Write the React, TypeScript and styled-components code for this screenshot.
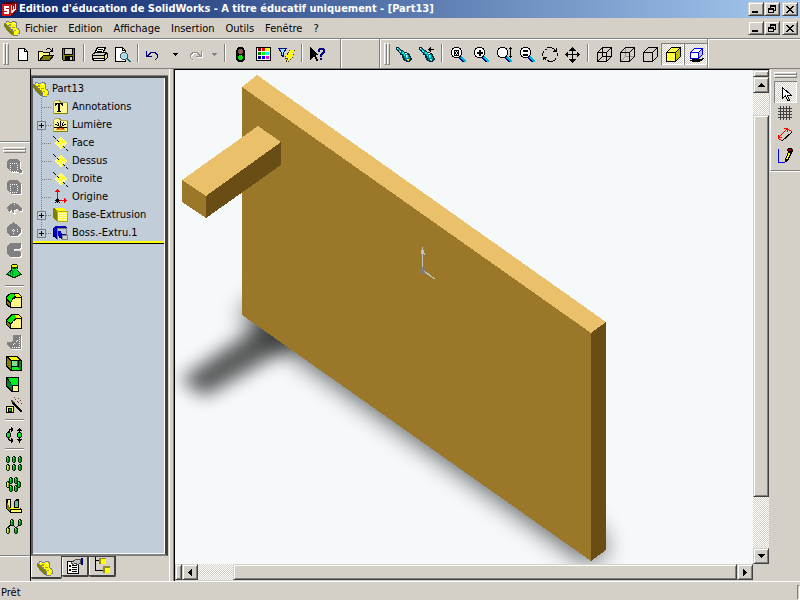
import React from "react";
import styled, { createGlobalStyle, css } from "styled-components";

const face = "#d4d0c8";
const dither = `repeating-conic-gradient(#ffffff 0 25%, ${face} 0 50%) 0 0 / 2px 2px`;
const uiFont = `"DejaVu Sans Condensed", "DejaVu Sans", sans-serif`;

const GlobalStyle = createGlobalStyle`
  * { box-sizing: border-box; }
  body { margin: 0; background: ${face}; overflow: hidden; }
  button { font: inherit; color: inherit; background: none; border: 0; padding: 0; margin: 0; }
  svg { display: block; flex: none; }
`;

const raised = css`
  background: ${face};
  border: 1px solid;
  border-color: ${face} #404040 #404040 ${face};
  box-shadow: inset 1px 1px #fff, inset -1px -1px #808080;
`;

const Window = styled.div`
  display: flex;
  flex-direction: column;
  height: 100vh;
  background: ${face};
  color: #000;
  font: 11px/14px ${uiFont};
  cursor: default;
`;

const TitleBar = styled.header`
  display: flex;
  align-items: center;
  height: 18px;
  flex: none;
  padding: 0 2px 0 1px;
  background: linear-gradient(90deg, #0a246a, #a6caf0);
`;

const Title = styled.h1`
  flex: 1;
  margin: 0 0 0 1px;
  color: #fff;
  font: bold 11px/18px ${uiFont};
  white-space: nowrap;
`;

const WindowButtons = styled.div`
  display: flex;
  margin-left: auto;
`;

const WindowButton = styled.button<{ $spaced?: boolean }>`
  ${raised}
  width: 16px;
  height: 14px;
  margin-left: ${(p) => (p.$spaced ? 2 : 0)}px;
  display: flex;
  align-items: center;
  justify-content: center;
`;

const MenuBar = styled.nav`
  display: flex;
  align-items: center;
  height: 20px;
  flex: none;
  padding: 0 2px 0 4px;
`;

const MenuItem = styled.button`
  padding: 2px 6px 0 5px;
  height: 18px;
  white-space: nowrap;
`;

const Toolbars = styled.div`
  display: flex;
  flex: none;
  height: 31px;
  border-top: 1px solid #808080;
  box-shadow: inset 0 1px #fff;
  border-bottom: 1px solid #808080;
`;

const Band = styled.div<{ $width?: number }>`
  display: flex;
  align-items: flex-start;
  padding: 4px 0 0 3px;
  width: ${(p) => (p.$width ? `${p.$width}px` : "auto")};
  border-right: 1px solid #808080;
  box-shadow: 1px 0 #fff;
  margin-right: 1px;
`;

const Grip = styled.div<{ $flat?: boolean }>`
  flex: none;
  display: flex;
  flex-direction: ${(p) => (p.$flat ? "column" : "row")};
  width: ${(p) => (p.$flat ? "auto" : "6px")};
  height: ${(p) => (p.$flat ? "6px" : "22px")};
  margin: ${(p) => (p.$flat ? "0 3px 4px" : "0 2px 0 0")};
  &::before,
  &::after {
    content: "";
    flex: 1;
    border: 1px solid;
    border-color: #fff #808080 #808080 #fff;
  }
`;

const Tool = styled.button<{ $pressed?: boolean; $side?: boolean }>`
  flex: none;
  width: 23px;
  height: ${(p) => (p.$side ? 21 : 22)}px;
  padding: ${(p) => (p.$side ? "1px 0 0 2px" : "1px 0 0 3px")};
  ${(p) =>
    p.$pressed &&
    css`
      background: ${dither};
      box-shadow: inset 1px 1px #808080, inset -1px -1px #fff;
    `}
`;

const DropArrow = styled.button<{ $width: number }>`
  width: ${(p) => p.$width}px;
  height: 22px;
  display: flex;
  align-items: center;
  justify-content: center;
`;

const Rule = styled.div<{ $flat?: boolean }>`
  flex: none;
  ${(p) =>
    p.$flat
      ? css`
          height: 2px;
          margin: 3px 2px;
          width: 19px;
          border-top: 1px solid #808080;
          border-bottom: 1px solid #fff;
        `
      : css`
          width: 2px;
          margin: 1px 3px;
          height: 18px;
          border-left: 1px solid #808080;
          border-right: 1px solid #fff;
        `}
`;

const Workspace = styled.main`
  display: grid;
  grid-template-columns: 30px 140px minmax(0, 1fr) 30px;
  flex: 1;
  min-height: 0;
`;

const SideColumn = styled.aside`
  display: flex;
  flex-direction: column;
`;

const SideSpacer = styled.div`
  flex: none;
  height: 73px;
  border-bottom: 1px solid #808080;
  box-shadow: 0 1px #fff;
`;

const SideTools = styled.div`
  flex: 1;
  display: flex;
  flex-direction: column;
  padding: 5px 0 0 3px;
  border-bottom: 1px solid #808080;
  ${Grip} { margin: 0 4px 3px 0; }
`;

const SideFoot = styled.div`
  flex: none;
  height: 25px;
  box-shadow: inset 0 1px #fff;
`;

const ManagerPanel = styled.section`
  display: flex;
  flex-direction: column;
  padding-top: 7px;
  border-left: 1px solid #000;
  border-right: 1px solid #fff;
  min-height: 0;
`;

const TreePane = styled.div`
  flex: 1;
  min-height: 0;
  margin-right: 1px;
  background: #c1cdd8;
  border: solid;
  border-width: 2px 3px 2px 2px;
  border-color: #404040 #404040 #808080 #606060;
  box-shadow: inset -1px -1px #fff, 0 -1px #808080;
`;

const Tree = styled.ul`
  list-style: none;
  margin: 0;
  padding: 1px 2px 0 0;
`;

const TreeRow = styled.li<{ $root?: boolean }>`
  display: flex;
  align-items: center;
  height: 18px;
  padding: 2px 0 0 ${(p) => (p.$root ? 0 : 2)}px;
  gap: 3px;
  white-space: nowrap;
`;

const Branch = styled.span`
  width: 17px;
  height: 18px;
  margin-right: -3px;
  flex: none;
`;

const RollbackBar = styled.div`
  height: 3px;
  margin-right: 1px;
  background: #ff0;
  border-bottom: 1px solid #000;
`;

const Tabs = styled.div`
  display: flex;
  height: 25px;
  flex: none;
`;

const Tab = styled.button<{ $active?: boolean }>`
  width: ${(p) => (p.$active ? 31 : 27)}px;
  height: ${(p) => (p.$active ? 23 : 21)}px;
  padding: ${(p) => (p.$active ? "3px 2px 0 0" : "0")};
  display: flex;
  align-items: center;
  justify-content: center;
  border: solid #404040;
  border-width: ${(p) => (p.$active ? "0 1px 2px 0" : "1px 2px 2px 0")};
  border-radius: 0 0 2px 2px;
  box-shadow: inset 1px 0 #fff;
`;

const Document = styled.section`
  display: grid;
  grid-template-columns: minmax(0, 1fr) 16px;
  grid-template-rows: minmax(0, 1fr) 16px;
  margin-left: 4px;
  border-left: 1px solid #000;
  border-top: 1px solid #000;
  border-right: 1px solid ${face};
  box-shadow: -1px 0 #808080;
  padding-bottom: 1px;
`;

const Viewport = styled.div`
  background: #f5f9fa;
  min-height: 0;
  overflow: hidden;
  svg { width: 100%; height: 100%; }
`;

const ScrollBar = styled.div<{ $vertical?: boolean }>`
  display: flex;
  flex-direction: ${(p) => (p.$vertical ? "column" : "row")};
  background: ${dither};
`;

const ScrollButton = styled.button`
  ${raised}
  flex: none;
  width: 16px;
  height: 16px;
  display: flex;
  align-items: center;
  justify-content: center;
`;

const Splitter = styled.div<{ $vertical?: boolean }>`
  ${raised}
  flex: none;
  width: ${(p) => (p.$vertical ? 16 : 7)}px;
  height: ${(p) => (p.$vertical ? 7 : 16)}px;
`;

const Track = styled.div<{ $vertical?: boolean; $before: number; $thumb: number; $after: number }>`
  flex: 1;
  min-width: 0;
  min-height: 0;
  display: grid;
  ${(p) => (p.$vertical ? "grid-template-rows" : "grid-template-columns")}:
    ${(p) => `${p.$before}fr ${p.$thumb}fr ${p.$after}fr`};
`;

const Thumb = styled.div<{ $vertical?: boolean }>`
  ${raised}
  ${(p) => (p.$vertical ? "grid-row: 2" : "grid-column: 2")};
`;

const SketchTools = styled.div`
  display: flex;
  flex-direction: column;
  align-items: flex-start;
  padding: 3px 0 4px 3px;
  border-left: 1px solid #fff;
  border-bottom: 1px solid #808080;
  box-shadow: 0 1px #fff;
  ${Grip} { align-self: stretch; margin: 0 3px 3px 0; }
`;

const StatusBar = styled.footer`
  display: flex;
  align-items: flex-end;
  justify-content: space-between;
  flex: none;
  height: 19px;
  padding: 0 0 0 1px;
  border-top: 1px solid #fff;
`;

const StatusCell = styled.div`
  width: 3px;
  height: 15px;
  border: 1px solid;
  border-color: #808080 #fff #fff #808080;
`;

function Svg({ w = 18, h = 18, children }: { w?: number; h?: number; children: React.ReactNode }) {
  return (
    <svg width={w} height={h} viewBox={`0 0 ${w} ${h}`} shapeRendering="crispEdges" fill="none" aria-hidden="true">
      {children}
    </svg>
  );
}

const Glyphs = {
  minimize: <path d="M0 6h6v2H0z" fill="#000" />,
  restore: <path d="M2.5 4V.5h5v5H6M2 1.5h6M.5 3.5h5v4h-5zM0 4.5h6" stroke="#000" />,
  close: <path d="M0 1h2v1h1v1h2V2h1V1h2v1H7v1H6v1H5v1h1v1h1v1h1v1H6V7H5V6H3v1H2v1H0V7h1V6h1V5h1V4H2V3H1V2H0z" fill="#000" />,
};

function FrameButtons() {
  return (
    <WindowButtons>
      <WindowButton aria-label="Réduire"><Svg w={8} h={8}>{Glyphs.minimize}</Svg></WindowButton>
      <WindowButton aria-label="Restaurer"><Svg w={8} h={8}>{Glyphs.restore}</Svg></WindowButton>
      <WindowButton aria-label="Fermer" $spaced><Svg w={8} h={8}>{Glyphs.close}</Svg></WindowButton>
    </WindowButtons>
  );
}

const PartIcon = () => (
  <Svg w={16} h={16}>
    <path d="M0 3h2V1h3v1h3V1h4v1h1v6h2v2h1v4h-2v2H9v-1H7v-2H5v-2H3V9H2V7H0z" fill="#808080" />
    <path d="M0 4h2v1h1v2h2v2h1v1h2v2h1v3H8v-1H6v-2H4v-2H2V8H1V6H0z" fill="#808000" />
    <path d="M2 3h1V2h2v1h3V2h3v1h1v5h1v1h1v1h1v3h-1v2h-4v-4H9V9H7V7H5V5H3V4H2z" fill="#ff0" />
    <path d="M5 4h2v2H5zM8 7h3v1H8zM10 10h2v1h-2z" fill="#b0a020" />
    <path d="M3 2h1v1H3zM9 3h2v1H9zM12 10h1v1h-1z" fill="#ffffc0" />
  </Svg>
);

const LogoIcon = () => (
  <Svg w={17} h={18}>
    <path d="M1 4h1V3h3V2h11v9h-1v2h-2v2h-2v1H1z" fill="#500000" />
    <path d="M1 4h9v12H1z" fill="#d01818" />
    <path d="M10 4h2V3h4v8h-2v2h-2v2h-2z" fill="#8c1010" />
    <path d="M3 6h5v2H5v1h3v5H3v-2h3v-1H3z" fill="#fff" />
    <path d="M10 5h1v5h1V6h1v3h1V4h1v6h-1v1h-1v1h-1v1h-2z" fill="#e8e8e8" />
  </Svg>
);

const Lens = ({ children }: { children?: React.ReactNode }) => (
  <Svg>
    <path d="M11 10h2v1h1v1h1v1h1v1h1v2h-2v-1h-1v-1h-1v-1h-1v-1h-1z" fill="#00b8d8" />
    <path d="M10 11h1v1h1v1h1v1h1v1h1v1h-2v-1h-1v-1h-1v-1h-1z" fill="#000080" />
    <path d="M5 1h5v1h2v2h1v5h-1v2h-2v1H5v-1H3V9H2V4h1V2h2z" fill="#000" />
    <path d="M5 2h5v1h1v1h1v5h-1v1h-1v1H5v-1H4V9H3V4h1V3h1z" fill="#fff" />
    {children}
  </Svg>
);

const Torch = ({ arrow }: { arrow?: boolean }) => (
  <Svg>
    <path d="M1 1h3v1h1v1h1v1h2v1h1v1h3v1h2v1h1v2h1v2h1v2h-1v1h-1v1h-4v-1H9v-1H8v-2H7V9H5V7H4V6H3V5H2V4H1z" fill="#002838" />
    <path d="M2 2h2v1h1v1h1v1h2v1h1v1h3v1h1v1h1v2h1v3h-1v1h-2v-1h-2v-2H9v-2H8V8H6V7H5V5H4V4H2z" fill="#008890" />
    <path d="M3 3h1v1h1v1h1v1H4V4H3zM7 6h2v2H7zM9 8h1v2H9zM11 9h2v3h-2z" fill="#00f0f0" />
    <path d="M2 2h1v1H2zM5 5h1v1H5zM10 7h2v1h-2zM11 9h1v2h-1zM12 13h1v1h-1z" fill="#fff" />
    <path d="M13 13h1v2h-1z" fill="#e0e000" />
    {arrow && <path d="M10 3h6v1h-6zM11 2h1v3h-1zM12 1h1v5h-1z" fill="#000" />}
  </Svg>
);

const Cube = ({ kind }: { kind: "wire" | "grey" | "hidden" | "shaded" | "shadow" }) => {
  if (kind === "shadow")
    return (
      <Svg>
        <path d="M3 14h2v-1h10v-1h2v1h-1v1h-1v1h-2v1H5v-1H3z" fill="#000" />
        <path d="M7.500 2.500h8v5l-4 5v-6h-8z" fill="#fff" stroke="#00f" />
        <path d="M11.500 12.500v-6l4-4v6z" fill="#c0c0c0" stroke="#00f" />
        <path d="M3.500 6.500h8v6h-8z" fill="#fff" stroke="#00f" />
      </Svg>
    );
  return (
    <Svg>
      {kind === "shaded" && (
        <>
          <path d="M2 6l5-5h10v9l-5 6H2z" fill="#ffff40" />
          <path d="M12 6l5-5v9l-5 6z" fill="#c0c000" />
          <path d="M3 8.500h8M3 10.500h8M3 12.500h8M3 14.500h8" stroke="#fffbc0" strokeDasharray="1 1" />
        </>
      )}
      {kind === "wire" && <path d="M7.500 1v9.500H17M7.500 10.500l-5 5" stroke="#000" />}
      {kind === "grey" && <path d="M7.500 1v9.500H17M7.500 10.500l-5 5" stroke="#909090" />}
      <path d="M2.500 6.500h9v9h-9zM2.500 6.500l5-5h9l-5 5M16.500 1.500v9l-5 5" stroke="#000" />
    </Svg>
  );
};

const undoPath = "M1 5h1v4h1V8h1V7h1V6h6v1h1v1h1v4h-1v1h-1v1h-1v-1h1v-1h1V9h-1V8h-1V7H6v1H5v1H4v1h3v1H1z";

const swatches = ["#800000", "#ff0000", "#ffff00", "#008000", "#00ff00", "#00ffff", "#000080", "#0000ff", "#ff00ff"];

const Icons: Record<string, React.ReactNode> = {
  neuf: <Svg><path d="M4.500 2.500h6l3 3v9h-9z" fill="#fff" stroke="#000" /><path d="M10.500 2.500v3h3" stroke="#000" /></Svg>,
  ouvrir: (
    <Svg>
      <path d="M1.500 14.500v-9h4l1 1h6v3" fill="#ffff80" stroke="#000" />
      <path d="M2.500 14.500l4-5h10l-4 5z" fill="#808000" stroke="#000" />
      <path d="M9 3.500h1M10 2.500h3M13 3.500h1M14 4.500h2M13 5.500h3M15.500 2v4" stroke="#000" />
    </Svg>
  ),
  enregistrer: (
    <Svg>
      <path d="M2.500 2.500h12v12h-11l-1-1z" fill="#808000" stroke="#000" />
      <path d="M5 3h7v5H5z" fill={face} /><path d="M4.500 3v5.500h8V3" stroke="#000" />
      <path d="M5 10h8v5H5z" fill="#000" /><path d="M10 11h2v3h-2z" fill={face} />
    </Svg>
  ),
  imprimer: (
    <Svg>
      <path d="M6.500 1.500h8l-3 6h-8z" fill="#fff" stroke="#000" />
      <path d="M7 3.500h5M6 5.500h5" stroke="#000" />
      <path d="M1.500 8.500l3-2h10l2 1v4l-3 3h-11l-1-2z" fill={face} stroke="#000" />
      <path d="M2 9.500h11v5M13 9l3-2M2 12.500h11" stroke="#000" />
      <path d="M10 10.500h2" stroke="#ff0" /><path d="M3 13h9v1H3z" fill="#fff" />
    </Svg>
  ),
  apercu: (
    <Svg>
      <path d="M1.500 1.500h7l3 3v11h-10z" fill="#fff" stroke="#000" /><path d="M8.500 1.500v3h3" stroke="#000" />
      <path d="M8.500 6.500h3l2 2v3l-2 2h-3l-2-2v-3z" fill="#a8dce4" stroke="#505050" />
      <path d="M12 12h2v1h1v1h1v1h1v1h-2v-1h-1v-1h-1v-1h-1z" fill="#006878" />
    </Svg>
  ),
  annuler: <Svg><path d={undoPath} fill="#000080" /></Svg>,
  retablir: (
    <Svg>
      <path d={undoPath} fill="#fff" transform="matrix(-1 0 0 1 16 1)" />
      <path d={undoPath} fill="#909090" transform="matrix(-1 0 0 1 15 0)" />
    </Svg>
  ),
  reconstruire: (
    <Svg>
      <path d="M6 1h5v1h1v2h1v10h-1v1h-1v1H6v-1H5v-1H4V4h1V2h1z" fill="#000" />
      <path d="M7 3h3v1h1v3h-1v1H7V7H6V4h1z" fill="#806060" /><path d="M7 4h1v1H7zM9 4h1v1H9zM8 5h1v1H8zM7 6h1v1H7zM9 6h1v1H9z" fill="#e03030" />
      <path d="M7 9h3v1h1v3h-1v1H7v-1H6v-3h1z" fill="#00e000" />
    </Svg>
  ),
  couleurs: (
    <Svg>
      <path d="M1 1h15v14H1z" fill="#000" />
      <path d="M2 2h13v12H2z" fill="#fff" />
      {swatches.map((c, i) => (
        <rect key={c} x={3 + (i % 3) * 4} y={2 + Math.floor(i / 3) * 4} width="3" height="3" fill={c} />
      ))}
    </Svg>
  ),
  filtre: (
    <Svg>
      <path d="M.500 2.500h8l-3 4v4l-2-1v-3z" fill="#80e8ff" stroke="#000080" />
      <path d="M12 4h4v1h-1v2h-1v1h2v1h-1v1h-1v1h-1v1h-1v1h-1v1h-1v1H8v-2h1v-2H7v-2h1V9h1V7h1V6h1V5h1z" fill="#ff0" />
      <path d="M11.500 4v1M10.500 6v1M9.500 7v2M7 10.500h1M7 12.500h3M9.500 12v2M8.500 14v2M10 15.500h1M12 13.500h1M14 11.500h1M15.500 8v1M16 4.500h1" stroke="#404000" />
    </Svg>
  ),
  aide: (
    <Svg>
      <path d="M1 1h1v1h1v1h1v1h1v1h1v1h1v1h1v1h1v1H7v2h1v2h1v2H7v-2H6v-2H4v1H3v1H2v1H1z" fill="#000" />
      <path d="M9 5V3h1V2h5v1h1v4h-1v1h-1v1h-1v2h-2V8h1V7h1V6h1V4h-3v2H9zM11 12h2v2h-2z" fill="#000080" />
    </Svg>
  ),
  vuePrecedente: <Torch />,
  orientation: <Torch arrow />,
  zoomMieux: <Lens><path d="M5 4h5v6H5z" fill="#000" /><path d="M6 5h1v1H6zM8 5h1v1H8zM7 6h1v2H7zM6 8h1v1H6zM8 8h1v1H8z" fill="#fff" /></Lens>,
  zoomFenetre: <Lens><path d="M7 4h2v2h2v2H9v2H7V8H5V6h2z" fill="#000" /></Lens>,
  zoomAvant: <Lens><path d="M15 1h1v1h1v1h-1v7h1v1h-1v1h-1v-1h-1v-1h1V3h-1V2h1z" fill="#000" /></Lens>,
  zoomSelection: <Lens><path d="M5 4h5v2H5zM5 8h5v2H5z" fill="#000" /></Lens>,
  rotation: (
    <Svg>
      <path d="M6 1.500h5M11 2.500h2M13.500 3v3M16.500 7v3M4 3.500h2M2.500 5v2M1.500 7v3M4.500 12v2M6 14.500h2M7 15.500h5M12 14.500h2M14.500 12v2" stroke="#000" />
      <path d="M12 5.500h3v-4M13 4.500h2M2 14V11.500h4M3 12.500h2" stroke="#000" />
    </Svg>
  ),
  translation: (
    <Svg><path d="M8 1h1v1h1v1h1v1h1v1H9v3h4V6h1v1h1v1h1v1h-1v1h-1v1h-1V9H9v4h3v1h-1v1h-1v1H9v1H8v-1H7v-1H6v-1H5v-1h3V9H4v2H3v-1H2V9H1V8h1V7h1V6h1v2h4V5H5V4h1V3h1V2h1z" fill="#000" /></Svg>
  ),
  filaire: <Cube kind="wire" />,
  cacheGris: <Cube kind="grey" />,
  cacheSupprime: <Cube kind="hidden" />,
  ombre: <Cube kind="shaded" />,
  ombrePortee: <Cube kind="shadow" />,
};

const embossed = (d: string, extra?: React.ReactNode) => (
  <Svg>
    <path d={d} fill="#fff" transform="translate(1 1)" />
    <path d={d} fill="#808080" />
    {extra}
  </Svg>
);

const dots = "M5 5.500h8M5 13.500h8M5.500 7v6M12.500 7v6";
const roundBlock = (chamfer: boolean) => (
  <Svg>
    <path d={chamfer ? "M1 6l6-5h6l4 4v11H6l-5-4z" : "M1 5l2-3 4-1h6l4 4v11H6l-5-3z"} fill="#000" />
    <path d={chamfer ? "M6 11l5-5h5v9H6z" : "M6 11l2-4 3-1h5v9H6z"} fill="#fff080" />
    <path d="M10 2h3l3 3h-5z" fill="#ff0" />
    <path d="M2 9l3 3v2l-3-2z" fill="#808000" />
    <path d={chamfer ? "M2 7l5-5h2l2 2-5 6-4-2z" : "M2 5l3-3h4l1 2-3 2-1 4-4-3z"} fill="#00f000" />
    <path d="M8 8.500h8M8 10.500h8M8 12.500h8M8 14.500h8" stroke="#fff" strokeDasharray="1 1" />
  </Svg>
);

const cylinder = (x: number, y: number, color = "#00c828") => (
  <React.Fragment key={`${x}-${y}`}>
    <path d={`M${x} ${y + 1}h1v-1h2v1h1v5h-1v1h-2v-1h-1z`} fill="#002800" />
    <path d={`M${x + 1} ${y + 2}h2v4h-2z`} fill={color} />
    <path d={`M${x + 1} ${y + 1}h1v1h-1z`} fill="#a0ffa0" />
    <path d={`M${x + 2} ${y + 3}h1v3h-1z`} fill="#000" opacity=".35" />
  </React.Fragment>
);

const SideIcons: Record<string, React.ReactNode> = {
  bossage: embossed("M2 3l2-2h8l3 3v7l2 2v2h-3l-1-1H6l-4-4z", <path d={dots} stroke="#fff" strokeDasharray="1 1" />),
  enlevement: embossed("M2 3l2-2h8l4 4v10H6l-4-4z", <path d={dots} stroke="#fff" strokeDasharray="1 1" />),
  revolution: embossed("M2 8l2-3 4-2 1-1 1 1 4 2 3 4v2h-3l-2-2-3 1v4H8l-1-4-3 2z", <path d="M9.500 2v4M8 13.500h4" stroke="#fff" strokeDasharray="1 1" />),
  enlevRevolution: embossed("M2 6l3-3 3-1V1l1 1 4 2 3 4v4l-4 3H5l-3-4z", <path d="M8.500 8v5M7 9.500h3M12.500 8v4" stroke="#fff" strokeDasharray="1 1" />),
  balayage: embossed("M2 4l3-3h10l1 1v4l-2 1H9v2h5l2 1v4l-2 1H5l-3-3z", <path d="M9 7.500h7" stroke="#fff" />),
  lissage: (
    <Svg>
      <path d="M7 1h5v1h1v4h-1v1h1v1h1v1h1v1h1v1h1v1h-2v1h-2v1h-2v1H7v-1H5v-1H3v-1H1v-1h1v-1h1V9h1V8h1V7h1V2h1z" fill="#003010" />
      <path d="M7 2h5v2H7z" fill="#ff0" />
      <path d="M7 5h1v1h3V5h1v3h1v1h1v1h1v1h-1v1h-2v1h-2v1H8v-1H6v-1H4v-1H3v-1h1V9h2V8h1z" fill="#00d828" />
      <path d="M7 7h1v5H7zM5 9h1v2H5z" fill="#008030" />
    </Svg>
  ),
  conge: roundBlock(false),
  chanfrein: roundBlock(true),
  nervure: embossed("M8 1h8v14H6l-4-4V8h4l2-2z", <path d="M14.500 3v11M7 13.500h8M8 11l5-5" stroke="#fff" strokeDasharray="1 1" />),
  coque: (
    <Svg>
      <path d="M1 1h11l5 4v11H6l-5-4z" fill="#000" /><path d="M3 2h8l4 3H6z" fill="#ff0" /><path d="M2 3l4 3v8l-4-3z" fill="#808000" />
      <path d="M7 6h9v9H7z" fill="#008828" /><path d="M7 6h5v5H7z" fill="#80e090" /><path d="M7 12h6l2 3H7z" fill="#00f020" /><path d="M6 5.500h7v6H6.500" stroke="#000" />
    </Svg>
  ),
  depouille: (
    <Svg>
      <path d="M1 1h13v15H7l-6-5z" fill="#000" /><path d="M3 2h10v7H7z" fill="#00f020" /><path d="M2 3l5 6v5l-5-4z" fill="#008030" />
      <path d="M8 10h5v5H8z" fill="#ffff80" />
    </Svg>
  ),
  percage: (
    <Svg>
      <path d="M1.500 9.500h7v6h-7z" fill="#ffff60" stroke="#000" /><path d="M3 11h4v4H3z" fill="#000" /><path d="M4 12h2v2H4z" fill="#0c0" />
      <path d="M8 5h1v1h1v1h1v1h1v1h1v1h1v1h1v1h1v1h1v2h-2v-1h-1v-1h-1v-1h-1v-1h-1v-1h-1V9H9V8H8V7H7V5z" fill="#000" />
      <path d="M6 3h1v1h1v1h1v1H8V5H7V4H6z" fill="#ff0" stroke="#000" strokeWidth=".5" />
      <path d="M10 2h1v1h-1zM13 1h1v1h-1zM15 3h1v1h-1zM12 4h1v1h-1zM16 6h1v1h-1zM9 0h1v1H9zM13 5h1v1h-1z" fill="#803030" />
    </Svg>
  ),
  esquisse: (
    <Svg>
      <path d="M3.500 6V5h1V3.500H8M6.500 1v5M7.500 2v3M3.500 11v2h1v1.500H8M6.500 12v5M7.500 13v3M14.500 2v15M13 3.500h3M12 4.500h5M13 14.500h3M12 13.500h5" stroke="#000" />
      <path d="M2 6h3v1h1v4H5v1H2v-1H1V7h1zM13 6h3v1h1v4h-1v1h-3v-1h-1V7h1z" fill="#000" /><path d="M2 7h3v4H2zM13 7h3v4h-3z" fill="#00e020" />
    </Svg>
  ),
  repetLin: <Svg>{cylinder(1, 1)}{cylinder(7, 1)}{cylinder(13, 1)}{cylinder(1, 9, "#f0f000")}{cylinder(7, 9)}{cylinder(13, 9)}</Svg>,
  repetCirc: <Svg>{cylinder(4, 1)}{cylinder(9, 1)}{cylinder(1, 5, "#f0f000")}{cylinder(12, 5)}{cylinder(4, 9)}{cylinder(9, 9)}</Svg>,
  symetrie: (
    <Svg>
      <path d="M1 2h5v8h3V4l2-2h3v9l3 1v4H5l-4-4z" fill="#000" /><path d="M3 3h2v7H3z" fill="#fff080" /><path d="M10 4h3v6h-3z" fill="#60c880" />
      <path d="M2 5v7l3 3v-4z" fill="#808000" /><path d="M5 11h10v1H5zM6 10h3v1H6z" fill="#ff0" /><path d="M6 13h10v2H6z" fill="#ffff70" />
    </Svg>
  ),
  repetEsq: <Svg>{cylinder(5, 1)}{cylinder(13, 1)}{cylinder(1, 9, "#f0f000")}{cylinder(9, 9)}<path d="M3 9l3-2M8 7l2 2M12 9l2-2" stroke="#000" /></Svg>,
};

const folder = (
  <>
    <path d="M1 3l2-2h4l2 2h7v12H1z" fill="#808000" /><path d="M1 4l2-2h4l1 2h7v10H1z" fill="#fff890" />
    <path d="M1.500 15V3.500l2-2h3l2 2h7" stroke="#b0a860" />
  </>
);

const planeIcon = (
  <Svg w={17} h={16}>
    <path d="M8 2h2v1h1v1h1v1h1v1h1v1h1v2h-1v1h-1v1h-1v1h-1v1h-1v1H8v-1H7v-1H6v-1H5v-1H4V9H3V7h1V6h1V5h1V4h1V3h1z" fill="#fffa90" />
    <path d="M8 3h2v1H8zM7 5h2v2H7zM5 7h2v2H5zM10 6h3v2h-3zM8 8h2v2H8zM9 11h2v2H9z" fill="#ff0" />
    <path d="M1 1h1v1h1v1h1v1H3V3H2V2H1zM5 5h1v1h1v1H6V6H5zM11 11h1v1h1v1h-1v-1h-1zM14 14h1v1h1v1h-1v-1h-1z" fill="#000" />
  </Svg>
);

const TreeIcons: Record<string, React.ReactNode> = {
  annotations: <Svg w={17} h={16}>{folder}<path d="M3 4h8v3h-1V6H9V5H8v7h1v1H5v-1h1V5H5v1H4v1H3z" fill="#000" /></Svg>,
  lumiere: (
    <Svg w={17} h={16}>
      {folder}
      <path d="M2 10h13v1H2zM3 7h2v1H3zM5 8h2v1H5zM5 5h1v1H5zM6 6h1v2H6zM8 4h1v5H8zM11 5h1v1h-1zM10 6h1v2h-1zM12 7h2v1h-2zM10 8h2v1h-2z" fill="#000" />
      <path d="M7 9h3v1H7zM5 11h2v1H5zM10 11h2v1h-2z" fill="#d02020" /><path d="M4 12h9v1H4zM7 11h3v1H7z" fill="#e88820" />
    </Svg>
  ),
  plan: planeIcon,
  origine: (
    <Svg w={17} h={16}>
      <path d="M5 0h1v1h1v1h1v1H6v8h6V9h1v1h1v1h1v1h-1v1h-1v1h-1v-2H5V3H3V2h1V1h1z" fill="#f00" />
      <path d="M5 9h1v1h1v1h1v1H7v1h1v1H7v-1H6v1H5v-1H4v1H3v-1h1v-1H3v-1h1v-1h1z" fill="#000" />
    </Svg>
  ),
  base: (
    <Svg w={17} h={16}>
      <path d="M1 1h10l5 4v10H5l-4-4z" fill="#808000" /><path d="M2 1h9l4 3H5z" fill="#ff0" /><path d="M5 4h11v11H5z" fill="#ffff40" />
      <path d="M6 6.500h9M6 8.500h9M6 10.500h9M6 12.500h9" stroke="#fffbc0" strokeDasharray="1 1" /><path d="M5 4.500h10.500v10H5.500z" stroke="#b0a820" />
    </Svg>
  ),
  boss: (
    <Svg w={17} h={16}>
      <path d="M1 3l2-2h10l2 2H5v11l-4-3z" fill="#0000b0" /><path d="M1.500 3v8l4 3" stroke="#000050" /><path d="M5.500 14.500v-11h9v8" stroke="#808080" />
      <path d="M6 4h8v10H6z" fill="#c0c8d8" /><path d="M6 6h3v2h1v1h4v2h-2v3H9v-1H7v-2H6z" fill="#0000c0" /><path d="M10.500 10.500h5v4h-5z" fill="#d0d0d0" stroke="#808080" />
    </Svg>
  ),
};

const treeItems = [
  { label: "Annotations", icon: "annotations" },
  { label: "Lumière", icon: "lumiere", plus: true },
  { label: "Face", icon: "plan" },
  { label: "Dessus", icon: "plan" },
  { label: "Droite", icon: "plan" },
  { label: "Origine", icon: "origine" },
  { label: "Base-Extrusion", icon: "base", plus: true },
  { label: "Boss.-Extru.1", icon: "boss", plus: true },
];

const arrows = {
  up: "M3 0h1v1h1v1h1v1h1v1H0V3h1V2h1V1h1z",
  down: "M0 0h7v1H6v1H5v1H4v1H3V3H2V2H1V1H0z",
  left: "M3 0h1v7H3V6H2V5H1V4H0V3h1V2h1V1h1z",
  right: "M0 0h1v1h1v1h1v1h1v1H3v1H2v1H1v1H0z",
};

function Arrow({ dir }: { dir: keyof typeof arrows }) {
  const tall = dir === "left" || dir === "right";
  return <Svg w={tall ? 4 : 7} h={tall ? 7 : 4}><path d={arrows[dir]} fill="#000" /></Svg>;
}

function Drop({ width, label, grey }: { width: number; label: string; grey?: boolean }) {
  return (
    <DropArrow $width={width} aria-label={label}>
      <Svg w={5} h={3}><path d="M0 0h5v1H4v1H3v1H2V2H1V1H0z" fill={grey ? "#808080" : "#000"} /></Svg>
    </DropArrow>
  );
}

const tools = (names: string[]) => names.map((n) => <Tool key={n} aria-label={n}>{Icons[n]}</Tool>);
const sideTools = (names: string[]) => names.map((n) => <Tool key={n} $side aria-label={n}>{SideIcons[n]}</Tool>);

function Model() {
  return (
    <svg viewBox="175 70 578 494" role="img" aria-label="Part13">
      <defs>
        <filter id="soft" x="-40%" y="-40%" width="180%" height="180%"><feGaussianBlur stdDeviation="9" /></filter>
        <filter id="softer" x="-30%" y="-30%" width="160%" height="160%"><feGaussianBlur stdDeviation="12" /></filter>
      </defs>
      <path d="M238 316L588 564l20-14-10-19-330-240z" fill="#000" opacity=".62" filter="url(#softer)" />
      <path d="M180 380l86-60 34 22-95 54z" fill="#000" opacity=".64" filter="url(#soft)" />
      <g shapeRendering="crispEdges">
        <path d="M242 87l349 246v228L242 315z" fill="#9b772a" />
        <path d="M242 87l15-12 349 247-15 11z" fill="#eac06a" />
        <path d="M591 333l15-11v228l-15 11z" fill="#6a4d14" />
        <path d="M182 180l76-54 23 16-75 54z" fill="#eac06a" />
        <path d="M182 180l24 16v22l-24-16z" fill="#9b772a" />
        <path d="M206 196l75-54v23l-75 53z" fill="#6a4d14" />
        <path d="M422.500 270v-23M421.500 250v4M423.500 250v4M424.500 253v2M423 271l12 8M426 272l6 5" stroke="#c0c0c0" fill="none" />
        <path d="M419 270.500h7M422.500 267v7M420 268l5 5M425 268l-5 5" stroke="#808080" fill="none" />
      </g>
    </svg>
  );
}

export default function App() {
  return (
    <Window>
      <GlobalStyle />
      <TitleBar>
        <LogoIcon />
        <Title>Edition d'éducation de SolidWorks - A titre éducatif uniquement - [Part13]</Title>
        <FrameButtons />
      </TitleBar>
      <MenuBar>
        <PartIcon />
        {["Fichier", "Edition", "Affichage", "Insertion", "Outils", "Fenêtre", "?"].map((m) => <MenuItem key={m}>{m}</MenuItem>)}
        <FrameButtons />
      </MenuBar>
      <Toolbars>
        <Band $width={341}>
          <Grip />
          {tools(["neuf", "ouvrir", "enregistrer"])}
          <Rule />
          {tools(["imprimer", "apercu"])}
          <Rule />
          {tools(["annuler"])}
          <Drop width={20} label="Liste annuler" />
          {tools(["retablir"])}
          <Drop width={13} label="Liste rétablir" grey />
          <Rule />
          {tools(["reconstruire", "couleurs", "filtre"])}
          <Rule />
          {tools(["aide"])}
        </Band>
        <Band $width={38} />
        <Band>
          <Grip />
          {tools(["vuePrecedente", "orientation"])}
          <Rule />
          {tools(["zoomMieux", "zoomFenetre", "zoomAvant", "zoomSelection", "rotation", "translation"])}
          <Rule />
          {tools(["filaire", "cacheGris", "cacheSupprime"])}
          <Tool $pressed aria-label="ombre">{Icons.ombre}</Tool>
          <Tool $pressed aria-label="ombrePortee">{Icons.ombrePortee}</Tool>
        </Band>
      </Toolbars>
      <Workspace>
        <SideColumn>
          <SideSpacer />
          <SideTools>
            <Grip $flat />
            {sideTools(["bossage", "enlevement", "revolution", "enlevRevolution", "balayage", "lissage"])}
            <Rule $flat />
            {sideTools(["conge", "chanfrein", "nervure", "coque", "depouille", "percage"])}
            <Rule $flat />
            {sideTools(["esquisse"])}
            <Rule $flat />
            {sideTools(["repetLin", "repetCirc", "symetrie", "repetEsq"])}
          </SideTools>
          <SideFoot />
        </SideColumn>
        <ManagerPanel>
          <TreePane>
            <Tree>
              <TreeRow $root><PartIcon />Part13</TreeRow>
              {treeItems.map((t, i) => (
                <TreeRow key={t.label}>
                  <Branch>
                    <Svg w={17} h={18}>
                      <path d={`M6.500 0v${i === treeItems.length - 1 ? 10 : 18}M7 9.500h10`} stroke="#808080" strokeDasharray="1 1" />
                      {t.plus && <><path d="M2.500 5.500h8v8h-8z" fill="#c1cdd8" stroke="#808080" /><path d="M4 9.500h5M6.500 7v5" stroke="#000" /></>}
                    </Svg>
                  </Branch>
                  {TreeIcons[t.icon]}
                  {t.label}
                </TreeRow>
              ))}
            </Tree>
            <RollbackBar />
          </TreePane>
          <Tabs>
            <Tab $active aria-label="FeatureManager"><PartIcon /></Tab>
            <Tab aria-label="PropertyManager">
              <Svg>
                <path d="M1.500 4.500h11v12h-11z" fill="#fff" stroke="#000" />
                <path d="M3 8h2v2H3zM3 12h2v2H3zM6 8h5v1H6zM6 10h5v1H6zM6 12h5v1H6zM6 14h5v1H6z" fill="#000" />
                <path d="M5.500 5.500l4-3h5v4l-3 1-2-1-3 1z" fill="#c0c0c0" stroke="#505050" /><path d="M15 1h2v7h-2z" fill="#000080" />
              </Svg>
            </Tab>
            <Tab aria-label="ConfigurationManager">
              <Svg>
                <path d="M2.500 0v13.500H10M3 3.500h4" stroke="#000" />
                <path d="M6 1h7v6H6zM10 9h7v7h-7z" fill="#908820" /><path d="M8 2h5v5H8zM12 11h5v5h-5z" fill="#ff0" />
              </Svg>
            </Tab>
          </Tabs>
        </ManagerPanel>
        <Document>
          <Viewport><Model /></Viewport>
          <ScrollBar $vertical>
            <Splitter $vertical />
            <ScrollButton aria-label="Haut"><Arrow dir="up" /></ScrollButton>
            <Track $vertical $before={22} $thumb={382} $after={51}><Thumb $vertical /></Track>
            <ScrollButton aria-label="Bas"><Arrow dir="down" /></ScrollButton>
          </ScrollBar>
          <ScrollBar>
            <Splitter />
            <ScrollButton aria-label="Gauche"><Arrow dir="left" /></ScrollButton>
            <Track $before={35} $thumb={504} $after={0}><Thumb /></Track>
            <ScrollButton aria-label="Droite"><Arrow dir="right" /></ScrollButton>
          </ScrollBar>
        </Document>
        <SideColumn>
          <SketchTools>
            <Grip $flat />
            <Tool $pressed aria-label="Sélectionner">
              <Svg><path d="M5.500 3.500v11l3-3 2 5h2l-2-5h4z" fill="#fff" stroke="#000" /></Svg>
            </Tool>
            <Tool $side aria-label="Grille">
              <Svg><path d="M4.500 1v14M7.500 1v14M10.500 1v14M13.500 1v14M2 3.500h14M2 6.500h14M2 9.500h14M2 12.500h14" stroke="#404040" /></Svg>
            </Tool>
            <Tool $side aria-label="Cotation">
              <Svg>
                <path d="M2 9h1v1h1V9h1V8h1V7h1V6h1V5h1V4h1V3H8V2h4v4h-1V4h-1v1H9v1H8v1H7v1H6v1H5v1H4v1h2v1H2z" fill="#f00" />
                <path d="M2 12l4 3M12 3l4 3" stroke="#f00" strokeDasharray="1 1" /><path d="M6 15l10-9" stroke="#000" />
              </Svg>
            </Tool>
            <Tool $side aria-label="Esquisse">
              <Svg>
                <path d="M2.500 2v13.500H9" stroke="#00f" /><path d="M12 1h4v1h1v3h-1v2h-1v2h-1v2h-1v2h-1v1h-1v1H9v-4h1V9h1V6h1V4h-1V2h1z" fill="#000" /><path d="M12 6h2v2h-1v2h-1v2h-2v-1h1V9h1z" fill="#ff0" /><path d="M12 2h3v2h-3z" fill="#900000" />
              </Svg>
            </Tool>
          </SketchTools>
        </SideColumn>
      </Workspace>
      <StatusBar>
        <span>Prêt</span>
        <StatusCell />
      </StatusBar>
    </Window>
  );
}
